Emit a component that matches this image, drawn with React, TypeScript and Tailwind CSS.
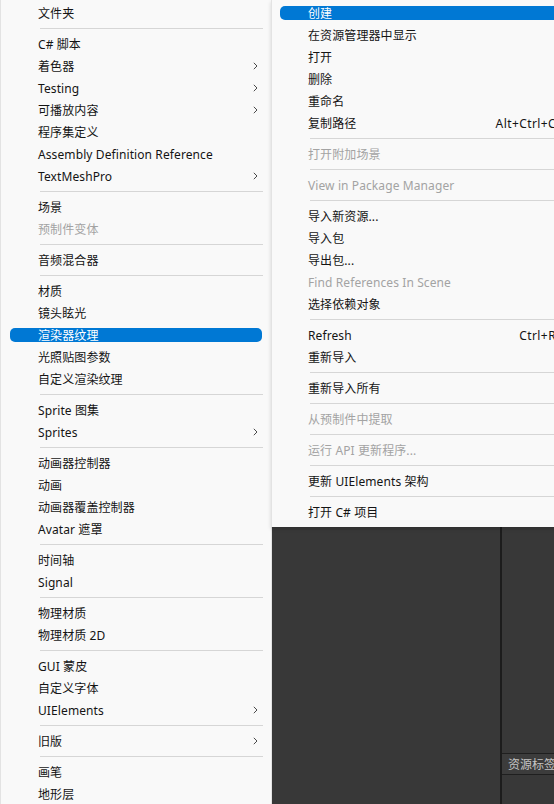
import React from 'react';

type Item =
  | { sep: true }
  | { label: string; sub?: boolean; disabled?: boolean; active?: boolean; shortcut?: string };

const S: Item = { sep: true };

const leftItems: Item[] = [
  { label: '文件夹' },
  S,
  { label: 'C# 脚本' },
  { label: '着色器', sub: true },
  { label: 'Testing', sub: true },
  { label: '可播放内容', sub: true },
  { label: '程序集定义' },
  { label: 'Assembly Definition Reference' },
  { label: 'TextMeshPro', sub: true },
  S,
  { label: '场景' },
  { label: '预制件变体', disabled: true },
  S,
  { label: '音频混合器' },
  S,
  { label: '材质' },
  { label: '镜头眩光' },
  { label: '渲染器纹理', active: true },
  { label: '光照贴图参数' },
  { label: '自定义渲染纹理' },
  S,
  { label: 'Sprite 图集' },
  { label: 'Sprites', sub: true },
  S,
  { label: '动画器控制器' },
  { label: '动画' },
  { label: '动画器覆盖控制器' },
  { label: 'Avatar 遮罩' },
  S,
  { label: '时间轴' },
  { label: 'Signal' },
  S,
  { label: '物理材质' },
  { label: '物理材质 2D' },
  S,
  { label: 'GUI 蒙皮' },
  { label: '自定义字体' },
  { label: 'UIElements', sub: true },
  S,
  { label: '旧版', sub: true },
  S,
  { label: '画笔' },
  { label: '地形层' },
];

const rightItems: Item[] = [
  { label: '创建', active: true },
  { label: '在资源管理器中显示' },
  { label: '打开' },
  { label: '删除' },
  { label: '重命名' },
  { label: '复制路径', shortcut: 'Alt+Ctrl+C' },
  S,
  { label: '打开附加场景', disabled: true },
  S,
  { label: 'View in Package Manager', disabled: true },
  S,
  { label: '导入新资源...' },
  { label: '导入包' },
  { label: '导出包...' },
  { label: 'Find References In Scene', disabled: true },
  { label: '选择依赖对象' },
  S,
  { label: 'Refresh', shortcut: 'Ctrl+R' },
  { label: '重新导入' },
  S,
  { label: '重新导入所有' },
  S,
  { label: '从预制件中提取', disabled: true },
  S,
  { label: '运行 API 更新程序...', disabled: true },
  S,
  { label: '更新 UIElements 架构' },
  S,
  { label: '打开 C# 项目' },
];

const Chevron = () => (
  <svg width="5" height="8" viewBox="0 0 5 8" className="shrink-0">
    <path d="M0.8 0.8 L4 4 L0.8 7.2" fill="none" stroke="#4a4a4a" strokeWidth="1" />
  </svg>
);

const tone = (it: { active?: boolean; disabled?: boolean }) =>
  it.active ? 'bg-[#0078d4] text-white' : it.disabled ? 'text-[#a3a3a3]' : 'text-[#141414]';

const LeftMenu = () => (
  <div className="absolute left-0 top-0 w-[272px] h-[804px] bg-[#f9f9f9] border-x border-[#e3e3e3] pt-[2px]">
    {leftItems.map((it, i) =>
      'sep' in it ? (
        <div key={i} className="h-[9px] flex items-center pl-[39px] pr-[8px]">
          <div className="h-px w-full bg-[#d6d6d6]" />
        </div>
      ) : (
        <div key={i} className="h-[22px] flex items-center px-[9px]">
          <div className={`h-[14px] w-full rounded-[5px] flex items-center pl-[28px] pr-[4px] ${tone(it)}`}>
            <span className="flex-1 whitespace-nowrap pt-[2px] tracking-[0.1px]">{it.label}</span>
            {it.sub && <Chevron />}
          </div>
        </div>
      )
    )}
  </div>
);

const RightMenu = () => (
  <div className="absolute left-[271px] top-0 w-[300px] h-[527px] bg-[#f9f9f9] border-l border-[#e3e3e3] pt-[2px] shadow-[0_2px_4px_rgba(0,0,0,0.15)]">
    {rightItems.map((it, i) =>
      'sep' in it ? (
        <div key={i} className="h-[9px] flex items-center pl-[38px]">
          <div className="h-px w-full bg-[#d6d6d6]" />
        </div>
      ) : (
        <div key={i} className="h-[22px] flex items-center pl-[8px]">
          <div className={`h-[14px] w-full rounded-l-[5px] flex items-center pl-[28px] pr-[15px] ${tone(it)}`}>
            <span className="flex-1 whitespace-nowrap pt-[2px] tracking-[0.1px]">{it.label}</span>
            {it.shortcut && <span className="whitespace-nowrap pt-[2px] tracking-[0.4px]">{it.shortcut}</span>}
          </div>
        </div>
      )
    )}
  </div>
);

export default function App() {
  return (
    <div
      className="relative w-[554px] h-[804px] overflow-hidden bg-[#383838] text-[12px] leading-none"
      style={{ fontFamily: '"Noto Sans", "Noto Sans CJK SC", sans-serif' }}
    >
      <div className="flex h-full">
        <div className="flex-1 bg-[#383838]" />
        <div className="w-[2px] bg-[#1c1c1c]" />
        <div className="w-[52px] flex flex-col">
          <div className="flex-1" />
          <div className="h-[22px] border-y border-[#1f1f1f] bg-[#3c3c3c] flex items-center pl-[6px] pt-[2px] text-[#c4c4c4] whitespace-nowrap overflow-hidden">
            资源标签
          </div>
          <div className="h-[29px]" />
        </div>
      </div>
      <LeftMenu />
      <RightMenu />
    </div>
  );
}
